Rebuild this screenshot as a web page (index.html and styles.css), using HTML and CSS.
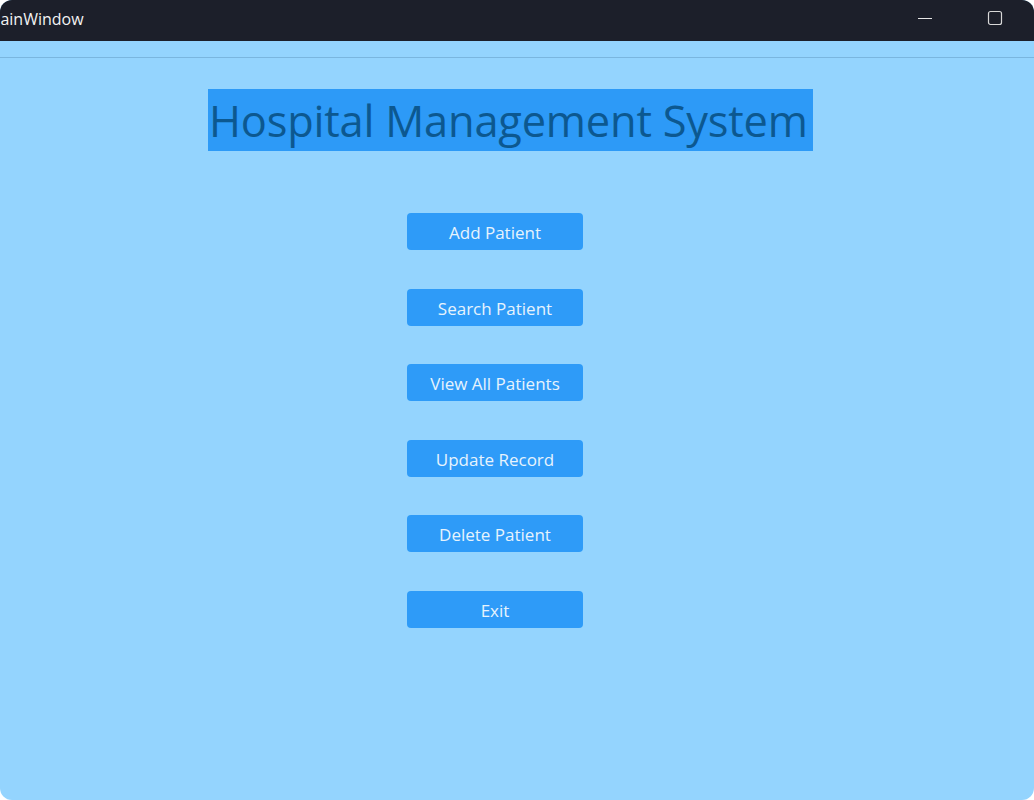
FILE: index.html
```html
<!DOCTYPE html>
<html>
<head>
<meta charset="utf-8">
<title>MainWindow</title>
<link rel="stylesheet" href="styles.css">
</head>
<body>
<div class="window">
  <div class="titlebar">
    <span class="title">MainWindow</span>
    <div class="controls">
      <span class="ctl min"><svg width="16" height="16" viewBox="0 0 16 16"><line x1="1" y1="8.5" x2="15" y2="8.5" stroke="#e6e6e6" stroke-width="1"/></svg></span>
      <span class="ctl max"><svg width="16" height="16" viewBox="0 0 16 16"><rect x="1.5" y="1.5" width="13" height="13" rx="2" fill="none" stroke="#d8d8d8" stroke-width="1.2"/></svg></span>
    </div>
  </div>
  <div class="strip"></div>
  <div class="content">
    <div class="heading">Hospital Management System</div>
    <div class="menu">
      <button class="btn">Add Patient</button>
      <button class="btn">Search Patient</button>
      <button class="btn">View All Patients</button>
      <button class="btn">Update Record</button>
      <button class="btn">Delete Patient</button>
      <button class="btn">Exit</button>
    </div>
  </div>
</div>
</body>
</html>
```

FILE: styles.css
```css
html, body {
  margin: 0;
  padding: 0;
  background: #ffffff;
}
body {
  width: 1034px;
  height: 800px;
  overflow: hidden;
  font-family: "Open Sans", "Noto Sans", sans-serif;
}
.window {
  width: 1034px;
  height: 800px;
  border-radius: 12px;
  overflow: hidden;
  background: #94d4fe;
  display: flex;
  flex-direction: column;
}
.titlebar {
  height: 41px;
  background: #1c1f2a;
  display: flex;
  align-items: center;
  justify-content: space-between;
  flex-shrink: 0;
}
.title {
  color: #f2f2f2;
  font-size: 16px;
  margin-left: -14px;
  margin-top: -4px;
}
.controls {
  display: flex;
  align-items: center;
  height: 100%;
}
.ctl {
  display: flex;
  align-items: center;
  justify-content: center;
  width: 46px;
  height: 100%;
}
.ctl svg { display: block; }
.min { margin-right: 24px; margin-top: -6px; }
.max { margin-right: 16px; margin-top: -5px; }
.strip {
  height: 16px;
  background: #94d4fe;
  border-bottom: 1px solid #7ab6df;
  flex-shrink: 0;
}
.content {
  flex: 1;
  display: flex;
  flex-direction: column;
}
.heading {
  margin-top: 31px;
  margin-left: 208px;
  width: 605px;
  height: 62px;
  box-sizing: border-box;
  padding-left: 1px;
  background: #2d9af7;
  color: #0c5890;
  font-size: 43.4px;
  line-height: 64px;
  white-space: nowrap;
  letter-spacing: -0.2px;
  overflow: hidden;
}
.menu {
  margin-top: 62px;
  margin-left: 407px;
  display: flex;
  flex-direction: column;
  gap: 38.6px;
}
.btn {
  width: 176px;
  height: 37px;
  border: none;
  border-radius: 4px;
  background: #2e9bf8;
  color: #e6f3fd;
  font-family: "Open Sans", "Noto Sans", sans-serif;
  font-size: 17px;
  padding: 0 0 0 0;
  padding-top: 2px;
  display: flex;
  align-items: center;
  justify-content: center;
}
```
